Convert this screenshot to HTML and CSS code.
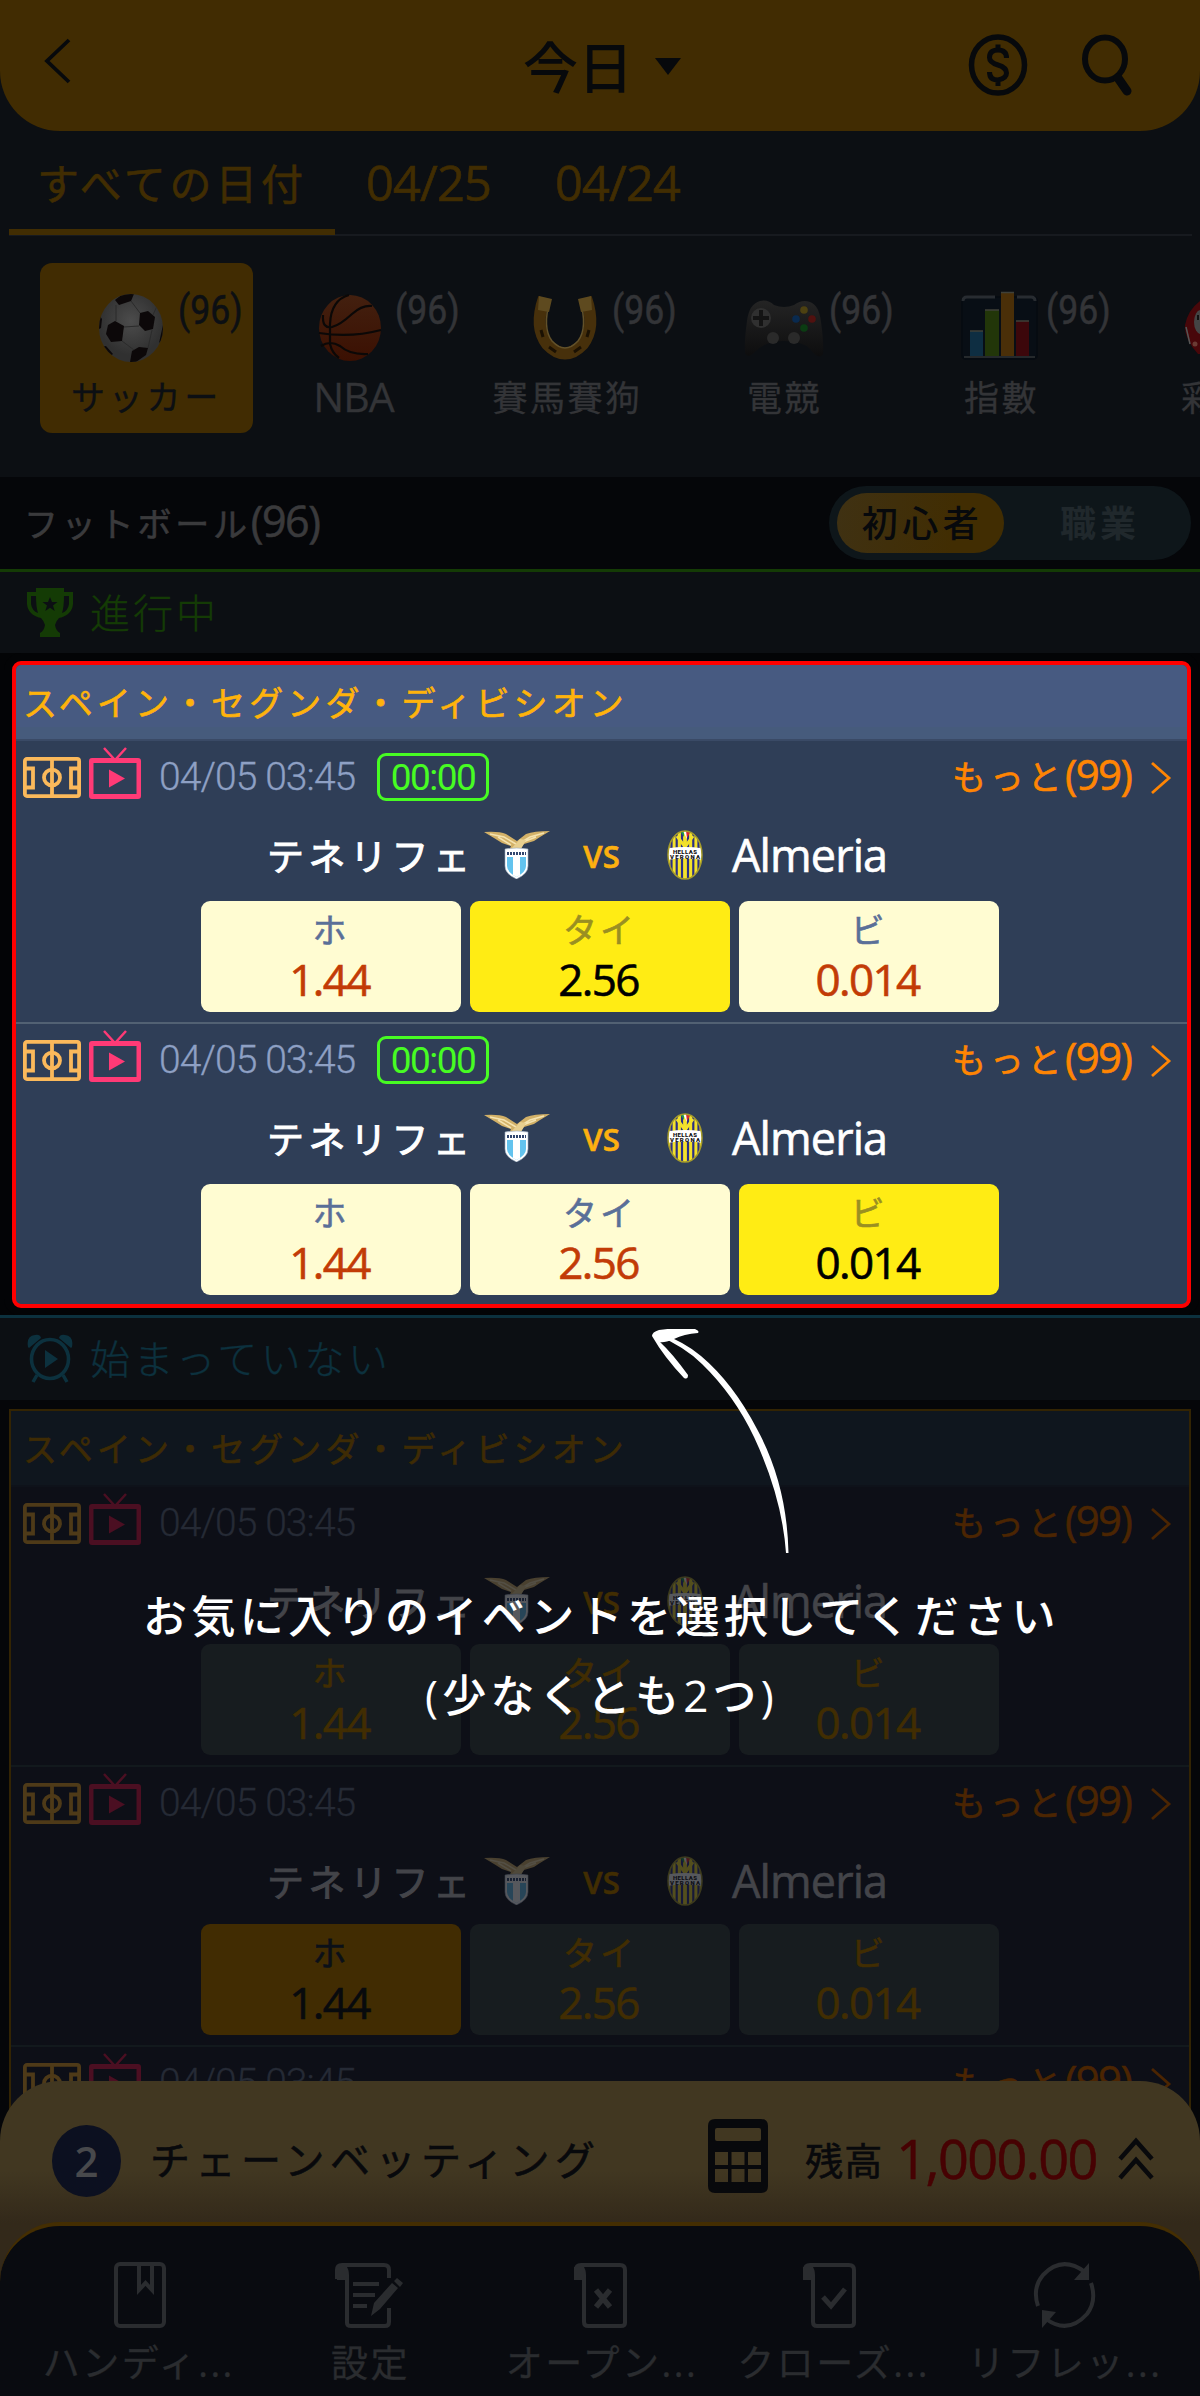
FILE: index.html
```html
<!DOCTYPE html>
<html lang="ja">
<head>
<meta charset="utf-8">
<title>今日</title>
<link rel="stylesheet" href="styles.css">
</head>
<body>
<svg class="sprite" width="0" height="0" aria-hidden="true">
  <symbol id="pitch" viewBox="0 0 58 41">
    <g fill="none" stroke="currentColor" stroke-width="3.800">
      <rect x="1.900" y="1.900" width="54.200" height="37.200" rx="2"/>
      <path d="M29 2v37M2 11.500h8v19H2M56 11.500h-8v19h8"/>
      <ellipse cx="29" cy="20.500" rx="8" ry="7.800"/>
    </g>
  </symbol>
  <symbol id="tv" viewBox="0 0 52 52">
    <path d="M15 1l10 11M37 1L27 12" fill="none" stroke="currentColor" stroke-width="2.500"/>
    <path fill="currentColor" fill-rule="evenodd" d="M3 11h46q3 0 3 3v35q0 3-3 3H3q-3 0-3-3V14q0-3 3-3zM4.500 16v31h43V16zM20 22.500l16 9-16 9z"/>
  </symbol>
  <symbol id="chev" viewBox="0 0 22 34">
    <path d="M2 2l17 15L2 32" fill="none" stroke="currentColor" stroke-width="2.800"/>
  </symbol>
  <symbol id="eagle" viewBox="0 0 66 48">
    <path d="M0 1q15-1 22 2l11 7 9-7q8-3 24-3L56 6l-6 4-10 3-6 7H25l2-5-9-3-8-5z" fill="#d3b168"/>
    <path d="M6 3l14 3 12 7M60 2l-14 4-10 6M14 6l13 8M52 6l-13 5" stroke="#f5e3b0" stroke-width="1.500" fill="none"/>
    <path d="M27 18l9-10 6 1-5 9z" fill="#e8cf8f"/>
    <path d="M21 18q12-2 23 0v17q0 8-11.500 13Q21 43 21 35z" fill="#fff" stroke="#9aabc0" stroke-width=".6"/>
    <path d="M23 26h19v9q0 6-9.500 11Q23 41 23 35z" fill="#63c3ee"/>
    <path d="M29 26h7v18l-3.500 2-3.500-2z" fill="#fff"/>
    <path d="M23 22.500h19" stroke="#31456e" stroke-width="3" stroke-dasharray="2 1"/>
  </symbol>
  <symbol id="verona" viewBox="0 0 36 50">
    <clipPath id="oval"><ellipse cx="18" cy="25" rx="17" ry="24"/></clipPath>
    <g clip-path="url(#oval)">
      <path fill="#f3e12b" d="M0 0h36v50H0z"/>
      <path d="M4.500 0v50M9.700 0v50M15 0v50M21 0v50M26.300 0v50M31.500 0v50" stroke="#2b2f86" stroke-width="2.200"/>
      <path d="M10 6l8 11 8-11" fill="none" stroke="#f3e12b" stroke-width="3"/>
      <path fill="#1c9a49" d="M13 1h4v6z"/><path fill="#fff" d="M16 1h4v8z"/><path fill="#dd2a2a" d="M19 1h5l-4 7z"/>
      <path fill="#fff" d="M0 18.500q18-3 36 0v11.500q-18-3-36 0z"/>
      <g class="crest-text"><text x="18" y="23.500" textLength="24">HELLAS</text><text x="18" y="29" textLength="30">VERONA</text></g>
    </g>
    <ellipse cx="18" cy="25" rx="17" ry="24" fill="none" stroke="#a49a2c" stroke-width="1.500"/>
  </symbol>
</svg>

<div class="page">
  <header class="header">
    <svg class="back" width="30" height="48" viewBox="0 0 30 48"><path d="M26 3L4 24l22 21" fill="none" stroke="currentColor" stroke-width="3.800"/></svg>
    <h1 class="title">今日<i class="caret"></i></h1>
    <div class="tools">
      <svg width="60" height="62" viewBox="0 0 60 62">
        <ellipse cx="30" cy="31" rx="26.500" ry="28" fill="none" stroke="currentColor" stroke-width="5.500"/>
        <path d="M38.500 24q0-8-8.500-8t-8.500 7.500q0 5 8.500 7.500 8.500 2.500 8.500 8t-8.500 7q-8.500 0-8.500-8M30 10.500v6M30 46v6" fill="none" stroke="currentColor" stroke-width="5"/>
      </svg>
      <svg width="52" height="62" viewBox="0 0 52 62">
        <ellipse cx="24" cy="25" rx="20" ry="21.500" fill="none" stroke="currentColor" stroke-width="6"/>
        <path d="M37 44l9 13" stroke="currentColor" stroke-width="9" stroke-linecap="round"/>
      </svg>
    </div>
  </header>

  <nav class="tabs">
    <span class="tab tab-on">すべての日付</span>
    <span class="tab tab-num">04/25</span>
    <span class="tab tab-num">04/24</span>
  </nav>

  <section class="sports">
    <div class="sport sport-on">
      <div class="sport-top">
        <svg class="pic" width="84" height="74" viewBox="0 0 84 74">
          <defs><radialGradient id="sb" cx=".5" cy=".4"><stop offset="0" stop-color="#4c4c4c"/><stop offset="1" stop-color="#303030"/></radialGradient></defs>
          <clipPath id="bc"><ellipse cx="42" cy="37" rx="32" ry="34"/></clipPath>
          <ellipse cx="42" cy="37" rx="32" ry="34" fill="url(#sb)"/>
          <g clip-path="url(#bc)"><g fill="#0c0809"><path d="M26 9l9-7 10 1-3 7-12 4z"/><path d="M51 22l8-2 7 6-2 12-8 2-6-6z"/><path d="M19 34l7-4 9 5-2 15-11 1-5-8z"/><path d="M43 60l7-4 9 1-2 7-10 7h-6z"/><path d="M10 24l3 4-1 9-4 2zM17 55l7 8-4 3-8-10zM74 34v14l-4 4z"/></g>
          <path d="M27 14v16M42 10l9 12M35 36l15-1M33 50l12 9M59 57l4-18M64 24l4-9" fill="none" stroke="#2b2b2b" stroke-width="1"/></g>
        </svg><span class="count">(96)</span>
      </div>
      <div class="sport-name">サッカー</div>
    </div>
    <div class="sport">
      <div class="sport-top">
        <svg class="pic" width="84" height="74" viewBox="0 0 84 74">
          <defs><linearGradient id="bb" x1="0" y1="0" x2="0" y2="1"><stop offset="0" stop-color="#43200f"/><stop offset="1" stop-color="#3b1002"/></linearGradient></defs>
          <ellipse cx="44" cy="37" rx="31" ry="33" fill="url(#bb)"/>
          <path d="M43 4Q25 9 24 33v20q2 9 9 14M17 24q-1 14 9 12 8-2 20-13 10-9 20-8M13 42q32 5 62-3M15 55q9-6 19 0 10 9 28 8" fill="none" stroke="#0b0807" stroke-width="2.200"/>
        </svg><span class="count">(96)</span>
      </div>
      <div class="sport-name latin">NBA</div>
    </div>
    <div class="sport">
      <div class="sport-top">
        <svg class="pic" width="84" height="74" viewBox="0 0 84 74">
          <path d="M21 7q-10 29 3 46 18 19 36 0 13-17 3-46" fill="none" stroke="#47300b" stroke-width="12"/>
          <path d="M27 9q-8 28 2 41 13 14 26 0 10-13 2-41" fill="none" stroke="#62512a" stroke-width="1.500"/>
          <path d="M16 5l13 3-3 13-11-2zM68 5L55 8l3 13 11-2z" fill="#5e4a1f"/>
          <path d="M18 39l2 7M26 56l7 5M51 61l7-5M64 46l2-7" stroke="#1b1103" stroke-width="3"/>
        </svg><span class="count">(96)</span>
      </div>
      <div class="sport-name">賽馬賽狗</div>
    </div>
    <div class="sport">
      <div class="sport-top">
        <svg class="pic" width="84" height="74" viewBox="0 0 84 74">
          <defs><linearGradient id="gp" x1="0" y1="0" x2="0" y2="1"><stop offset="0" stop-color="#242424"/><stop offset="1" stop-color="#0d0d0e"/></linearGradient></defs>
          <path d="M20 10q8-2 14 4 10 4 20 0 8-6 16-3 9 3 11 20 3 21 2 32-4 7-13-5-8-8-26-8T16 60Q7 69 5 62 4 51 7 30q2-17 13-20z" fill="url(#gp)"/>
          <circle cx="21" cy="27" r="10" fill="#303030"/><path d="M21 19v16M13 27h16" stroke="#141414" stroke-width="4"/>
          <circle cx="33" cy="47" r="6" fill="#2a2a2a"/><circle cx="54" cy="47" r="6" fill="#2a2a2a"/>
          <circle cx="64" cy="19" r="3.800" fill="#4d4111"/><circle cx="56" cy="28" r="3.800" fill="#092a4f"/><circle cx="72" cy="28" r="3.800" fill="#51110f"/><circle cx="64" cy="37" r="3.800" fill="#0b3c12"/>
        </svg><span class="count">(96)</span>
      </div>
      <div class="sport-name">電競</div>
    </div>
    <div class="sport">
      <div class="sport-top">
        <svg class="pic" width="84" height="74" viewBox="0 0 84 74">
          <rect x="5" y="6" width="75" height="62" rx="4" fill="#080e15" stroke="#060b11" stroke-width="2"/>
          <path d="M6 10q0-4 4-4h28M60 6h14q4 0 4 4" fill="none" stroke="#282c31" stroke-width="3"/><path d="M7 66h71" stroke="#25292c" stroke-width="2"/>
          <path fill="#0e2e42" d="M13 40h13v25H13z"/><path fill="#223609" d="M28 19h14v46H28z"/><path fill="#4a2f08" d="M44 2h13v63H44z"/><path fill="#3c070b" d="M59 30h13v35H59z"/>
          <path d="M13 40h13M28 19h14M44 1.500h13M59 30h13" stroke="#3f4039" stroke-width="1.500"/>
        </svg><span class="count">(96)</span>
      </div>
      <div class="sport-name">指數</div>
    </div>
    <div class="sport">
      <div class="sport-top">
        <svg class="pic" width="84" height="74" viewBox="0 0 84 74">
          <path d="M26 10h40v53H24Q10 48 11 34q3-15 15-24z" fill="#48070a"/><ellipse cx="27" cy="31" rx="7" ry="12" fill="#444"/><path d="M12 36l4 17" stroke="#555" stroke-width="1.500"/><circle cx="21" cy="53" r="2.500" fill="#6a3b34"/><path d="M24 24v5" stroke="#111" stroke-width="2"/>
        </svg>
      </div>
      <div class="sport-name">彩票</div>
    </div>
  </section>

  <section class="subhead">
    <div class="subhead-name">フットボール<span class="lat">(96)</span></div>
    <div class="switch"><span class="switch-on">初心者</span><span class="switch-off">職業</span></div>
  </section>

  <section class="state state-live">
    <svg width="46" height="49" viewBox="0 0 46 49">
      <path d="M9 0h28v4h9v12q-1 11-14 14-3 3-4 7 1 6 5 8v4H13v-4q4-2 5-8-1-4-4-7Q1 27 0 16V4h9zM4 8v8q1 7 7 9-2-6-2-17zM42 8h-5q0 11-2 17 6-2 7-9z" fill="currentColor" fill-rule="evenodd"/>
      <path d="M23 9l2 5h5.500l-4.500 3.500 1.700 5.500-4.700-3.300-4.700 3.300 1.700-5.500-4.500-3.500H21z" fill="#0c0f13"/>
    </svg>
    <span>進行中</span>
  </section>

  <section class="league league-lit">
    <h2 class="league-name">スペイン・セグンダ・ディビシオン</h2>
    <article class="match">
      <div class="meta"><svg width="58" height="41" class="i-pitch"><use href="#pitch"/></svg><svg width="52" height="52" class="i-tv"><use href="#tv"/></svg><span class="date">04/05 03:45</span><span class="clock"><b>00:00</b></span><span class="more">もっと<span class="lat">(99)</span></span><svg width="22" height="34" class="i-chev"><use href="#chev"/></svg></div>
      <div class="teams"><span class="home">テネリフェ</span><svg width="66" height="48"><use href="#eagle"/></svg><span class="vs">VS</span><svg width="36" height="50"><use href="#verona"/></svg><span class="away">Almeria</span></div>
      <div class="odds"><div class="odd"><span>ホ</span><b>1.44</b></div><div class="odd odd-on"><span>タイ</span><b>2.56</b></div><div class="odd"><span>ビ</span><b>0.014</b></div></div>
    </article>
    <article class="match">
      <div class="meta"><svg width="58" height="41" class="i-pitch"><use href="#pitch"/></svg><svg width="52" height="52" class="i-tv"><use href="#tv"/></svg><span class="date">04/05 03:45</span><span class="clock"><b>00:00</b></span><span class="more">もっと<span class="lat">(99)</span></span><svg width="22" height="34" class="i-chev"><use href="#chev"/></svg></div>
      <div class="teams"><span class="home">テネリフェ</span><svg width="66" height="48"><use href="#eagle"/></svg><span class="vs">VS</span><svg width="36" height="50"><use href="#verona"/></svg><span class="away">Almeria</span></div>
      <div class="odds"><div class="odd"><span>ホ</span><b>1.44</b></div><div class="odd"><span>タイ</span><b>2.56</b></div><div class="odd odd-on"><span>ビ</span><b>0.014</b></div></div>
    </article>
  </section>

  <section class="state state-soon">
    <svg width="46" height="49" viewBox="0 0 46 49">
      <ellipse cx="23" cy="25" rx="18.500" ry="19.500" fill="none" stroke="currentColor" stroke-width="3.600"/>
      <path d="M1 13Q-1 2 8 1q5-1 6 3L2 14zM45 13Q47 2 38 1q-5-1-6 3l12 10zM18 16l13 9-13 9z" fill="currentColor"/>
      <path d="M10 41l-4 7M36 41l4 7" stroke="currentColor" stroke-width="3.500"/>
    </svg>
    <span>始まっていない</span>
  </section>

  <section class="league league-dim">
    <h2 class="league-name">スペイン・セグンダ・ディビシオン</h2>
    <article class="match">
      <div class="meta"><svg width="58" height="41" class="i-pitch"><use href="#pitch"/></svg><svg width="52" height="52" class="i-tv"><use href="#tv"/></svg><span class="date">04/05 03:45</span><span class="more">もっと<span class="lat">(99)</span></span><svg width="22" height="34" class="i-chev"><use href="#chev"/></svg></div>
      <div class="teams"><span class="home">テネリフェ</span><svg width="66" height="48"><use href="#eagle"/></svg><span class="vs">VS</span><svg width="36" height="50"><use href="#verona"/></svg><span class="away">Almeria</span></div>
      <div class="odds"><div class="odd"><span>ホ</span><b>1.44</b></div><div class="odd"><span>タイ</span><b>2.56</b></div><div class="odd"><span>ビ</span><b>0.014</b></div></div>
    </article>
    <article class="match">
      <div class="meta"><svg width="58" height="41" class="i-pitch"><use href="#pitch"/></svg><svg width="52" height="52" class="i-tv"><use href="#tv"/></svg><span class="date">04/05 03:45</span><span class="more">もっと<span class="lat">(99)</span></span><svg width="22" height="34" class="i-chev"><use href="#chev"/></svg></div>
      <div class="teams"><span class="home">テネリフェ</span><svg width="66" height="48"><use href="#eagle"/></svg><span class="vs">VS</span><svg width="36" height="50"><use href="#verona"/></svg><span class="away">Almeria</span></div>
      <div class="odds"><div class="odd odd-on"><span>ホ</span><b>1.44</b></div><div class="odd"><span>タイ</span><b>2.56</b></div><div class="odd"><span>ビ</span><b>0.014</b></div></div>
    </article>
    <article class="match match-last">
      <div class="meta"><svg width="58" height="41" class="i-pitch"><use href="#pitch"/></svg><svg width="52" height="52" class="i-tv"><use href="#tv"/></svg><span class="date">04/05 03:45</span><span class="more">もっと<span class="lat">(99)</span></span><svg width="22" height="34" class="i-chev"><use href="#chev"/></svg></div>
    </article>
  </section>

  <div class="dock">
    <div class="slip">
      <span class="badge">2</span>
      <span class="slip-name">チェーンベッティング</span>
      <svg class="calc" width="60" height="74" viewBox="0 0 60 74">
        <path fill="currentColor" fill-rule="evenodd" d="M7 0h46q7 0 7 7v60q0 7-7 7H7q-7 0-7-7V7q0-7 7-7zM9 9q-2 0-2 2v9q0 2 2 2h42q2 0 2-2v-9q0-2-2-2zM7 33v13h13V33zM23.500 33v13h13V33zM40 33v13h13V33zM7 50v13h13V50zM23.500 50v13h13V50zM40 50v13h13V50z"/>
      </svg>
      <span class="bal">残高</span>
      <span class="sum">1,000.00</span>
      <svg class="up" width="36" height="44" viewBox="0 0 36 44"><path d="M2 22L18 4l16 18M2 41l16-18 16 18" fill="none" stroke="currentColor" stroke-width="4.500"/></svg>
    </div>
    <nav class="menu">
      <div class="entry"><svg width="72" height="68" viewBox="0 0 72 68"><g fill="none" stroke="currentColor" stroke-width="4"><rect x="13" y="2" width="48" height="62" rx="4"/><path d="M36 3v25l6.500-7 6.500 7V3"/></g></svg><span>ハンディ...</span></div>
      <div class="entry"><svg width="72" height="68" viewBox="0 0 72 68"><g fill="none" stroke="currentColor" stroke-width="4"><path d="M3 17V8q0-5 5-5h42q5 0 5 5v8M10 4q3 4 3 9v48q0 3 4 3h34q4 0 4-4V46M19 22h26M19 33h22M19 44h14"/></g><path fill="currentColor" d="M3 5h8v13H3zM37 54l3-13 18-20 6 5-18 21zM60 19l3-3 6 5-3 4z"/></svg><span>設定</span></div>
      <div class="entry"><svg width="72" height="68" viewBox="0 0 72 68"><g fill="none" stroke="currentColor" stroke-width="4"><path d="M10 17V8q0-5 5-5h39q5 0 5 5v53q0 3-4 3H22q-4 0-4-4V13q0-5-3-9"/><path d="M30 28l14 17M44 28L30 45" stroke-width="5.500"/></g><path fill="currentColor" d="M8 5h9v13H8z"/></svg><span>オープン...</span></div>
      <div class="entry"><svg width="72" height="68" viewBox="0 0 72 68"><g fill="none" stroke="currentColor" stroke-width="4"><path d="M7 17V8q0-5 5-5h39q5 0 5 5v53q0 3-4 3H19q-4 0-4-4V13q0-5-3-9"/><path d="M25 35l8 9 14-17" stroke-width="5"/></g><path fill="currentColor" d="M5 5h9v13H5z"/></svg><span>クローズ...</span></div>
      <div class="entry"><svg width="72" height="68" viewBox="0 0 72 68"><path d="M9 44Q3 26 14 13 33-7 56 10M62 21q6 18-4 31Q39 73 17 57" fill="none" stroke="currentColor" stroke-width="4"/><path fill="currentColor" d="M60 1v17H45zM13 66V48l14 2z"/></svg><span>リフレッ...</span></div>
    </nav>
  </div>

  <svg class="pointer" width="146" height="230" viewBox="0 0 146 230" fill="#fff">
    <path d="M6 6Q34 18 51 35 83 66 103 108q28 60 32 116h2.500Q136 155 106 100 82 54 50 27 32 12 12 6z"/>
    <path d="M1 7Q1 3 8 1q22-3 36-1 5 2 3 4-14 1-24 6-10 4-14 3 12 11 28 33 0 5-4 3Q13 28 1 7z"/>
  </svg>
  <div class="hint">お気に入りのイベントを選択してください<br><span class="hint-2">(少なくとも2つ)</span></div>
</div>
</body>
</html>
```
FILE: styles.css
```css
* { box-sizing: border-box; }
body {
  margin: 0;
  background: #030406;
  font-family: "Open Sans", "Noto Sans CJK JP", "Noto Sans CJK TC", sans-serif;
}
h1, h2 { margin: 0; font-weight: 400; }
svg { display: block; flex: none; }
.sprite { position: absolute; }
.page { position: relative; width: 1200px; height: 2396px; overflow: hidden; background: #0c0f13; white-space: nowrap; -webkit-text-stroke: .6px; }
.lat { letter-spacing: -1px; }

/* header */
.header { display: flex; align-items: flex-start; height: 131px; padding: 34px 67px 0 43px; background: #412c02; color: #07090c; border-radius: 0 0 60px 60px; }
.back { margin-top: 3px; }
.title { display: flex; align-items: center; margin-left: 450px; font-size: 55px; font-weight: 500; line-height: 66px; -webkit-text-stroke: 0; }
.caret { margin: 0 0 2px 22px; border: 13px solid transparent; border-top: 17px solid; border-bottom: 0; }
.tools { display: flex; gap: 53px; margin-left: auto; }

/* date tabs */
.tabs { display: flex; height: 105px; margin: 0 8px 0 9px; border-bottom: 2px solid #171a1f; font-size: 42px; line-height: 54px; color: #412d02; }
.tab { height: 104px; padding-top: 26px; }
.tab-on { width: 326px; padding-left: 28px; border-bottom: 6px solid #412d02; letter-spacing: 3.700px; }
.tab-num { margin-left: 31px; width: 158px; font-size: 49px; line-height: 51px; letter-spacing: -1px; }

/* sports */
.sports { display: flex; gap: 4px; height: 241px; padding: 27px 0 0 40px; color: #333437; overflow: hidden; }
.sport { flex: none; width: 213px; height: 170px; padding-top: 28px; border-radius: 12px; }
.sport-on { background: #412c02; color: #0c0f13; }
.sport-top { display: flex; height: 74px; padding-left: 49px; }
.count { margin-left: 5px; font: 400 40px/39px Roboto, sans-serif; transform: scaleX(.89); transform-origin: 0 0; }
.sport-name { width: 187px; margin-top: 4px; text-align: center; font-family: "Open Sans", "Noto Sans CJK TC", sans-serif; font-size: 35px; line-height: 57px; letter-spacing: 2.500px; -webkit-text-stroke: .3px; }
.sport-on .sport-name { width: 213px; font-size: 34px; letter-spacing: 3.800px; }
.sport-name.latin { width: 193px; font-size: 41px; letter-spacing: -1px; line-height: 54px; }

/* sub header */
.subhead { display: flex; justify-content: space-between; height: 92px; padding: 9px 9px 0 24px; background: #050609; color: #3a3a3c; }
.subhead-name { font-size: 34px; line-height: 77px; letter-spacing: 3.800px; }
.subhead-name .lat { font-size: 43px; letter-spacing: -1.500px; line-height: 40px; }
.switch { display: flex; width: 362px; height: 74px; padding: 7px 8px; border-radius: 37px; background: #0e161a; font-size: 36px; -webkit-text-stroke: 0; }
.switch-on { width: 167px; height: 60px; border-radius: 30px; background: linear-gradient(100deg, #3f3113, #412d02 70%); color: #07090c; line-height: 62px; text-align: center; letter-spacing: 4.500px; font-weight: 500; text-indent: 4px; }
.switch-off { margin-left: 56px; line-height: 60px; letter-spacing: 4px; font-weight: 700; color: #20282c; font-family: "Noto Sans CJK TC", sans-serif; margin-top: -2px; }

/* state titles */
.state { display: flex; align-items: flex-start; gap: 17px; height: 84px; padding: 16px 27px 0; border-top: 3px solid; font-size: 40px; line-height: 49px; letter-spacing: 3px; font-weight: 300; font-family: "Open Sans", "Noto Sans CJK TC", sans-serif; -webkit-text-stroke: .3px; }
.state-live { color: #143b05; }
.state-soon { height: 85px; margin-top: 7px; letter-spacing: 3.600px; color: #0c313e; font-family: "Open Sans", "Noto Sans CJK JP", sans-serif; }

/* league cards */
.league { width: 1182px; margin-left: 9px; }
.league-name { height: 74px; line-height: 76px; font-size: 34px; letter-spacing: 4.100px; }
.match { height: 283px; padding-top: 6px; border-top: 2px solid; }
.league-lit { width: 1179px; margin-left: 12px; margin-top: 8px; height: 647px; border: 4px solid #f00; border-radius: 9px; background: #2f3e57; box-shadow: 0 0 0 8px #030406, -20px 0 0 8px #030406, 20px 0 0 8px #030406; overflow: hidden; }
.league-lit .league-name { padding-left: 7px; background: linear-gradient(#475a81 62px, #465b7c 62px); color: #ffb30b; }
.league-lit .match { padding-left: 7px; border-color: #526173; }
.league-lit .league-name + .match { border-color: #3a4a66; }

.meta { display: flex; align-items: center; width: 1152px; height: 60px; }
.i-pitch { color: #fbb95b; }
.i-tv { margin: -9px 0 0 8px; color: #ff3a76; }
.date { width: 218px; margin-left: 18px; font: 300 39px/60px Roboto, sans-serif; letter-spacing: -.900px; color: #8ea0c4; -webkit-text-stroke: .3px; }
.clock { width: 112px; height: 48px; border: 3px solid #47fc23; border-radius: 9px; color: #47fc23; text-align: center; -webkit-text-stroke: 0; }
.clock b { font: 400 37px/43px Roboto, sans-serif; letter-spacing: -1.500px; }
.more { width: 181px; margin-left: auto; font-size: 34px; line-height: 56px; letter-spacing: 3.700px; color: #ff8503; }
.more .lat { font-size: 42px; letter-spacing: -1.700px; line-height: 40px; }
.i-chev { margin: 2px 3px 0 17px; color: #ff8503; }

.teams { display: grid; grid-template-columns: 216px 68px 101px 65px auto; align-items: center; width: 1152px; height: 64px; margin-top: 16px; padding-left: 244px; color: #fff; }
.teams svg { justify-self: center; }
.home { font-size: 37px; letter-spacing: 4.500px; -webkit-text-stroke: 1px; }
.vs { text-align: center; font: 600 31px/40px "Open Sans", sans-serif; color: #fdb010; padding-top: 2px; }
.away { padding: 0 0 1px 15px; font-size: 45px; line-height: 60px; letter-spacing: -.900px; font-weight: 500; }
.crest-text { font: 900 6px Roboto, sans-serif; text-anchor: middle; fill: #111; }

.odds { display: flex; gap: 9px; margin: 14px 0 0 178px; }
.odd { width: 260px; height: 111px; padding-top: 4px; border-radius: 9px; background: #fffcd2; color: #c23b06; text-align: center; }
.odd span, .odd b { display: block; line-height: 50px; }
.odd span { font-size: 34px; letter-spacing: 3px; color: #5a6f98; }
.odd b { padding-right: 3px; font-size: 44px; font-weight: 400; letter-spacing: -1.600px; line-height: 48px; }
.odd-on { background: #ffec14; color: #000; }
.odd-on span { color: #9a8f22; }

.league-dim { position: relative; margin-top: 9px; border: 2px solid #332403; background: #0d0f17; box-shadow: 0 0 0 9px #050609; }
.league-dim .league-name { padding-left: 12px; background: #0f161e; color: #3e2b04; }
.league-dim .match { height: 280px; padding-left: 12px; border-color: #12191d; }
.league-dim .league-name + .match { border-color: #0e121a; }
.league-dim .odds { margin-top: 11px; }
.league-dim .i-pitch { color: #4e3a18; }
.league-dim .i-tv { color: #4b0f22; }
.league-dim .date { color: #252a35; }
.league-dim .more, .league-dim .i-chev { color: #4b2502; }
.league-dim .home, .league-dim .away { color: #434449; }
.league-dim .vs { color: #412d02; }
.league-dim .teams svg { opacity: .3; }
.league-dim .odd { background: #171c1f; color: #412d02; }
.league-dim .odd span { color: #412d02; }
.league-dim .odd-on { background: #412c02; color: #080a0d; }
.league-dim .odd-on span { color: #0b1018; }

/* bottom dock, floats over the list */
.dock { position: absolute; left: 0; bottom: 0; width: 1200px; height: 315px; border-radius: 60px 60px 0 0; background: linear-gradient(#413721 0, #413721 90px, #33291a 142px); color: #08090c; }
.slip { display: flex; align-items: center; height: 141px; padding: 18px 46px 0 52px; }
.badge { width: 69px; height: 72px; border-radius: 50%; background: #0c1020; color: #48494c; font-size: 42px; line-height: 72px; font-weight: 600; text-align: center; -webkit-text-stroke: 0; }
.slip-name { width: 588px; padding-left: 29px; margin-top: -5px; font-size: 40px; letter-spacing: 5.500px; }
.bal { width: 91px; margin: -5px 0 0 37px; font-size: 38px; letter-spacing: 1px; }
.sum { width: 222px; margin-top: -6px; font-size: 54px; letter-spacing: -1.600px; line-height: 60px; color: #470203; }
.up { margin-top: -4px; }
.calc { margin-top: -10px; }
.menu { display: flex; height: 174px; padding: 36px 19px 0 23px; border-top: 4px solid #442e02; border-radius: 60px 60px 0 0; background: #090b10; color: #2a2c2f; }
.entry { flex: 1; display: flex; flex-direction: column; align-items: center; font-size: 37px; line-height: 50px; letter-spacing: 2.500px; -webkit-text-stroke: .3px; }
.entry span { margin-top: 8px; }

/* coach mark */
.pointer { position: absolute; left: 651px; top: 1329px; }
.hint { position: absolute; left: 0; top: 1577px; width: 1200px; padding-left: 3px; text-align: center; color: #fff; font-size: 44px; line-height: 79px; letter-spacing: 4.400px; font-weight: 500; -webkit-text-stroke: 0; }
.hint-2 { letter-spacing: 4.200px; }
```
